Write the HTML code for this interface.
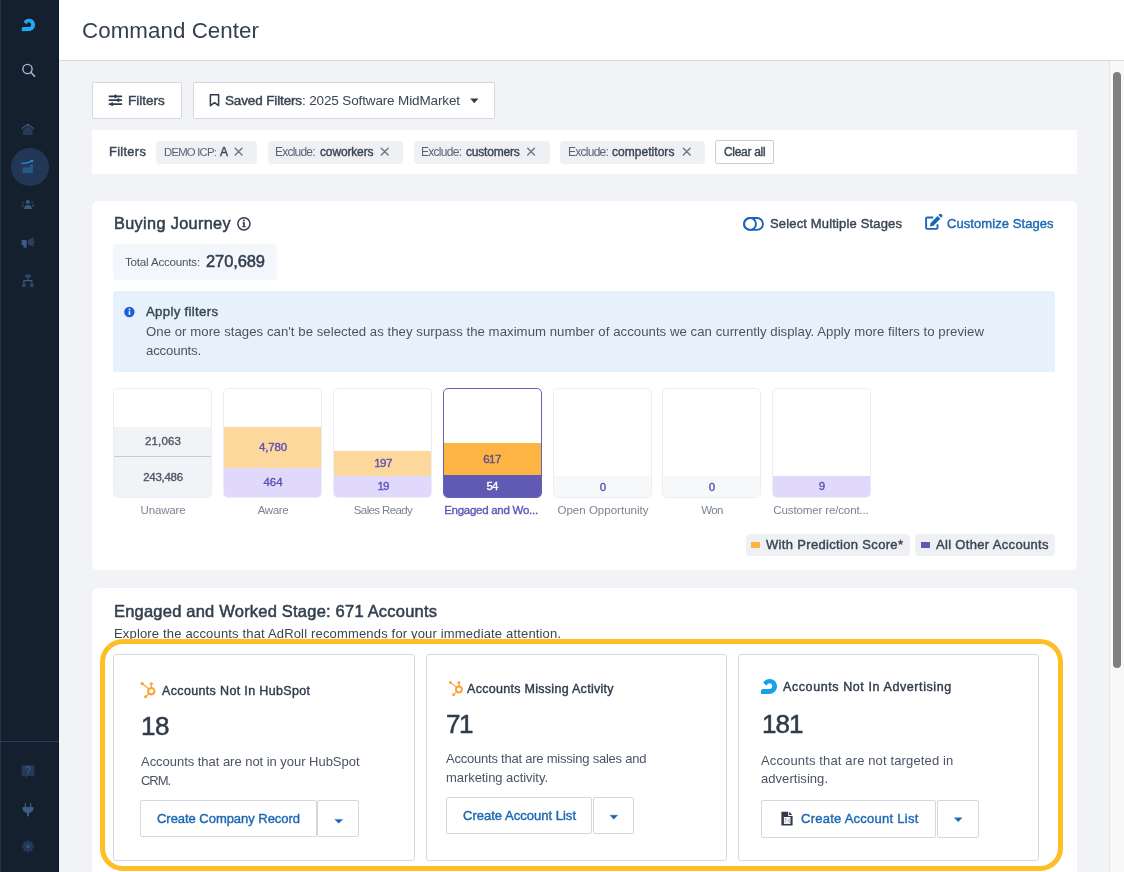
<!DOCTYPE html>
<html><head><meta charset="utf-8">
<style>
*{box-sizing:border-box;margin:0;padding:0}
html,body{width:1124px;height:872px;overflow:hidden;background:#f2f3f7;font-family:"Liberation Sans",sans-serif}
.a{position:absolute}
.tx{position:absolute;white-space:nowrap;line-height:1;will-change:transform}
.tx b{font-weight:400;-webkit-text-stroke:0.45px currentColor;color:#3a4454}
#side{left:0;top:0;width:59px;height:872px;background:#15202f;border-left:1px solid #2a3443;border-right:1px solid #0e1723}
#hdr{left:59px;top:0;width:1065px;height:61px;background:#fff;border-bottom:1px solid #d6d8de}
#track{left:1109px;top:61px;width:15px;height:811px;background:#f8f8f8;border-left:1px solid #e6e6e6}
#thumb{left:1113px;top:72px;width:8px;height:596px;background:#7f7f7f;border-radius:4px}
.btn{background:#fff;border:1px solid #d5d8de;border-radius:2px}
.card{background:#fff;border-radius:6px}
.chip{background:#eef0f4;border-radius:4px}
.stage{border:1px solid #eceef3;border-radius:5px;overflow:hidden;background:#fff}
.stage .f{position:absolute;left:0;width:100%}
.ic{position:absolute;overflow:visible}
</style></head><body>
<!-- sidebar -->
<div id="side" class="a"></div>
<svg class="ic" style="left:0;top:0" width="59" height="872" viewBox="0 0 59 872">
  <!-- logo -->
  <path transform="translate(21.8 18.7) scale(0.83)" d="M0 15 L0 12 C0 10.8 1 10 2.2 10 L8.6 10 C10.1 10 11.3 8.7 11.3 7.2 C11.3 5.6 10 4.3 8.5 4.3 C7.2 4.3 6.2 5.2 5.5 6.8 L2.1 3.6 C3.6 1.3 6 0 8.8 0 C12.8 0 16 3.2 16 7.3 C16 11.6 12.6 14.9 8.6 14.9 Z" fill="#1ea9f2"/>
  <!-- search -->
  <circle cx="27.5" cy="69" r="4.6" fill="none" stroke="#a6b9d3" stroke-width="1.4"/>
  <path d="M30.8 72.3 L34.6 76.2" stroke="#a6b9d3" stroke-width="1.6" stroke-linecap="round"/>
  <!-- home -->
  <path d="M22.1 128.6 L27.7 124.3 L33.7 128.6" fill="none" stroke="#3a5478" stroke-width="1.2" stroke-linecap="round" stroke-linejoin="round"/>
  <path d="M23.1 129.4 L27.9 126.3 L32.7 129.4 L32.7 134.9 L23.1 134.9 Z" fill="#263a55"/>
  <!-- active -->
  <circle cx="30" cy="167" r="19" fill="#223756"/>
  <path d="M22.6 173 V167 L24.4 167.9 L25.8 166.7 L27.6 167.7 L29.7 167.3 L30 164.6 L32.9 164.6 V173 Z" fill="#255b8c"/>
  <path d="M22 163.4 C25.4 163.4 28.4 163 31 161.4" fill="none" stroke="#2e8ad8" stroke-width="1.4" stroke-linecap="round"/>
  <path d="M30.2 160 L33.8 159.8 L32.2 162.6 Z" fill="#2e8ad8"/>
  <!-- people -->
  <circle cx="27.8" cy="202" r="2.1" fill="#3c5a80"/>
  <path d="M24.1 208.9 C24.1 206.4 25.4 205 27.9 205 C30.5 205 31.9 206.4 31.9 208.9 Z" fill="#3c5a80"/>
  <circle cx="23.3" cy="202.4" r="1.1" fill="#2a3f5c"/><ellipse cx="22.6" cy="205.8" rx="1.3" ry="1.2" fill="#2a3f5c"/>
  <circle cx="32.3" cy="202.4" r="1.1" fill="#2a3f5c"/><ellipse cx="33" cy="205.8" rx="1.3" ry="1.2" fill="#2a3f5c"/>
  <!-- megaphone -->
  <path d="M21.6 240 H26.8 V245.2 H26.4 V247.8 H23.6 V245.2 H21.6 Z" fill="#3d5a80" rx="1"/>
  <path d="M28 240 L33.6 237.2 L33.6 246.8 L28 244.6 Z" fill="#2a405c"/>
  <rect x="33.8" y="241" width="0.9" height="2.2" fill="#2a405c"/>
  <!-- org -->
  <rect x="25" y="274.4" width="5.8" height="3.2" rx="0.8" fill="#2f4566"/>
  <path d="M27.9 277.4 V280.6 M23.9 284 V280.6 H31.9 V284" fill="none" stroke="#3d5a80" stroke-width="1.1"/>
  <circle cx="23.9" cy="285.3" r="2" fill="#2f4566"/>
  <circle cx="31.9" cy="285.3" r="2" fill="#2f4566"/>
  <!-- separator -->
  <rect x="0" y="741" width="59" height="1" fill="#26405d"/>
  <!-- help -->
  <path d="M22.4 765.2 L33.6 765.2 Q34.4 765.2 34.4 766 L34.4 775.2 Q34.4 776 33.6 776 L27.8 776 L26.4 777.8 L25.4 776 L22.4 776 Q21.6 776 21.6 775.2 L21.6 766 Q21.6 765.2 22.4 765.2 Z" fill="#243958"/>
  <path d="M25.9 768.6 Q26.1 766.6 28.2 766.6 Q30.3 766.7 30.3 768.5 Q30.3 769.7 29 770.4 Q28.2 770.9 28.2 772" fill="none" stroke="#3d5a80" stroke-width="1.3"/>
  <rect x="27.5" y="773" width="1.4" height="1.4" fill="#3d5a80"/>
  <!-- plug -->
  <path d="M25.4 803.2 V807 M30.6 803.2 V807" stroke="#3d5a80" stroke-width="1.3"/>
  <path d="M22.6 807 H33.4 V808.6 Q33.4 811.6 29 813.2 V816.2 H27 V813.2 Q22.6 811.6 22.6 808.6 Z" fill="#3d5a80"/>
  <!-- gear -->
  <g transform="translate(28 846.4)" fill="#243958">
    <circle r="4.7"/>
    <g><rect x="-1.3" y="-6" width="2.6" height="12" rx=".5"/><rect x="-1.3" y="-6" width="2.6" height="12" rx=".5" transform="rotate(45)"/><rect x="-1.3" y="-6" width="2.6" height="12" rx=".5" transform="rotate(90)"/><rect x="-1.3" y="-6" width="2.6" height="12" rx=".5" transform="rotate(135)"/></g>
    <circle r="1.5" fill="#3d5a80"/>
  </g>
</svg>
<!-- header -->
<div id="hdr" class="a"></div>
<!-- scrollbar -->
<div id="track" class="a"></div>
<div id="thumb" class="a"></div>

<!-- filter buttons -->
<div class="a btn" style="left:92px;top:82px;width:90px;height:37px"></div>
<div class="a btn" style="left:193px;top:82px;width:302px;height:37px"></div>
<svg class="ic" style="left:0;top:0" width="1124" height="872" viewBox="0 0 1124 872">
  <!-- sliders icon -->
  <path d="M109.4 96.3 H121.4 M109.4 100.2 H121.4 M109.4 104.1 H121.4" stroke="#2f3b4c" stroke-width="1.7" stroke-linecap="round"/>
  <rect x="114.4" y="94.4" width="2" height="3.8" rx=".8" fill="#2f3b4c"/>
  <rect x="117.4" y="98.3" width="2" height="3.8" rx=".8" fill="#2f3b4c"/>
  <rect x="111.1" y="102.2" width="2" height="3.8" rx=".8" fill="#2f3b4c"/>
  <!-- bookmark -->
  <path d="M210.4 94.7 H218.6 V105.6 L214.5 102.6 L210.4 105.6 Z" fill="none" stroke="#2f3b4c" stroke-width="1.5" stroke-linejoin="round"/>
  <!-- caret -->
  <path d="M470.6 98.7 L478 98.7 L474.3 102.9 Z" fill="#2f3b4c" stroke="#2f3b4c" stroke-width=".4" stroke-linejoin="round"/>
</svg>

<!-- filter bar -->
<div class="a" style="left:92px;top:130px;width:985px;height:44px;background:#fff"></div>
<div class="a chip" style="left:156px;top:141px;width:101px;height:23px"></div>
<div class="a chip" style="left:268px;top:141px;width:135px;height:23px"></div>
<div class="a chip" style="left:414px;top:141px;width:136px;height:23px"></div>
<div class="a chip" style="left:560px;top:141px;width:145px;height:23px"></div>
<div class="a btn" style="left:715px;top:140px;width:59px;height:24px;border-color:#c9ccd3"></div>
<svg class="ic" style="left:0;top:0" width="1124" height="872" viewBox="0 0 1124 872">
  <g stroke="#6e7888" stroke-width="1.45" stroke-linecap="round">
    <path d="M235.2 148.3 L242 155 M242 148.3 L235.2 155"/>
    <path d="M381.3 148.3 L388.1 155 M388.1 148.3 L381.3 155"/>
    <path d="M527.7 148.3 L534.5 155 M534.5 148.3 L527.7 155"/>
    <path d="M683.3 148.3 L690.1 155 M690.1 148.3 L683.3 155"/>
  </g>
</svg>

<!-- buying journey card -->
<div class="a card" style="left:92px;top:201px;width:985px;height:369px"></div>
<div class="a" style="left:113px;top:244px;width:164px;height:36px;background:#f3f7fc;border-radius:4px"></div>
<div class="a" style="left:113px;top:291px;width:942px;height:81px;background:#e7f1fc;border-radius:2px"></div>
<svg class="ic" style="left:0;top:0" width="1124" height="872" viewBox="0 0 1124 872">
  <!-- info outline -->
  <circle cx="243.9" cy="223.8" r="6.1" fill="none" stroke="#333f4f" stroke-width="1.5"/>
  <rect x="243.1" y="222.6" width="1.7" height="4.4" fill="#333f4f"/>
  <rect x="242.2" y="226.2" width="3.6" height="1.1" fill="#333f4f"/>
  <rect x="242.4" y="222.4" width="2.4" height="1" fill="#333f4f"/>
  <circle cx="243.9" cy="220.4" r="1" fill="#333f4f"/>
  <!-- toggle -->
  <rect x="744.05" y="218" width="18.9" height="11.9" rx="5.95" fill="none" stroke="#1a66b6" stroke-width="1.9"/>
  <circle cx="750" cy="223.95" r="5.95" fill="none" stroke="#1a66b6" stroke-width="1.9"/>
  <!-- edit -->
  <path d="M933.2 217.5 H927.2 Q926.1 217.5 926.1 218.6 V227.8 Q926.1 228.9 927.2 228.9 H936.4 Q937.5 228.9 937.5 227.8 V224.2" fill="none" stroke="#1a66b6" stroke-width="1.9"/>
  <path d="M929.9 226.6 L930.6 223 L937.6 216 L940.4 218.8 L933.4 225.8 Z" fill="#1a66b6"/>
  <path d="M938.5 215.1 L939.6 214 Q940.4 213.3 941.2 214 L942.2 215 Q942.9 215.8 942.2 216.6 L941.1 217.7 Z" fill="#1a66b6"/>
  <!-- info filled -->
  <circle cx="129.4" cy="312" r="5.2" fill="#1e5fd4"/>
  <rect x="128.7" y="311.2" width="1.5" height="3.6" fill="#fff"/>
  <circle cx="129.45" cy="309.4" r=".85" fill="#fff"/>
</svg>

<!-- stages -->
<div class="a stage" style="left:113px;top:388px;width:99px;height:110px;background:#fff">
  <div class="f" style="top:38px;height:72px;background:#f2f3f7"></div>
  <div class="f" style="top:67px;height:1px;background:#c8cbd3"></div>
</div>
<div class="a stage" style="left:223px;top:388px;width:99px;height:110px">
  <div class="f" style="top:38px;height:41px;background:#fdd89c"></div>
  <div class="f" style="top:79px;height:31px;background:#e0d9fb"></div>
</div>
<div class="a stage" style="left:333px;top:388px;width:99px;height:110px">
  <div class="f" style="top:62px;height:25px;background:#fdd89c"></div>
  <div class="f" style="top:87px;height:23px;background:#e0d9fb"></div>
</div>
<div class="a stage" style="left:443px;top:388px;width:99px;height:110px;border-color:#6661ba">
  <div class="f" style="top:54px;height:32px;background:#fdb443"></div>
  <div class="f" style="top:86px;height:24px;background:#5f5bb5"></div>
</div>
<div class="a stage" style="left:553px;top:388px;width:99px;height:110px">
  <div class="f" style="top:87px;height:23px;background:#f7f8fa"></div>
</div>
<div class="a stage" style="left:662px;top:388px;width:99px;height:110px">
  <div class="f" style="top:87px;height:23px;background:#f7f8fa"></div>
</div>
<div class="a stage" style="left:772px;top:388px;width:99px;height:110px">
  <div class="f" style="top:87px;height:23px;background:#e0d9fb"></div>
</div>

<!-- legend -->
<div class="a chip" style="left:746px;top:534px;width:164px;height:22px"></div>
<div class="a chip" style="left:915px;top:534px;width:140px;height:22px"></div>
<div class="a" style="left:751px;top:542px;width:9px;height:6px;background:#fdb443"></div>
<div class="a" style="left:921px;top:542px;width:9px;height:6px;background:#5f5bb5"></div>

<!-- engaged card -->
<div class="a card" style="left:92px;top:588px;width:985px;height:300px"></div>
<div class='tx' id='t0' style='left:81.5px;top:20.00px;font-size:22.3px;font-weight:400;color:#333f4f;letter-spacing:0.078px;'>Command Center</div>
<div class='tx' id='t1' style='left:127.5px;top:94.00px;font-size:13.5px;font-weight:400;-webkit-text-stroke:0.43px #3a4555;color:#3a4555;letter-spacing:-0.008px;'>Filters</div>
<div class='tx' id='t2' style='left:225px;top:94.00px;font-size:13.5px;font-weight:400;color:#3a4555;letter-spacing:-0.138px;'><b>Saved Filters</b>: 2025 Software MidMarket</div>
<div class='tx' id='t3' style='left:108.5px;top:146.00px;font-size:12.8px;font-weight:400;-webkit-text-stroke:0.41px #3a4555;color:#3a4555;letter-spacing:0.326px;'>Filters</div>
<div class='tx' id='t4' style='left:164px;top:147.00px;font-size:11.3px;font-weight:400;color:#5b6474;letter-spacing:-0.763px;'>DEMO ICP:</div>
<div class='tx' id='t5' style='left:220.2px;top:146.00px;font-size:12px;font-weight:400;-webkit-text-stroke:0.38px #3a4454;color:#3a4454;letter-spacing:-1.016px;'>A</div>
<div class='tx' id='t6' style='left:275.4px;top:146.00px;font-size:12px;font-weight:400;color:#5b6474;letter-spacing:-0.776px;'>Exclude:</div>
<div class='tx' id='t7' style='left:319.7px;top:146.00px;font-size:12px;font-weight:400;-webkit-text-stroke:0.38px #3a4454;color:#3a4454;letter-spacing:-0.148px;'>coworkers</div>
<div class='tx' id='t8' style='left:421.3px;top:146.00px;font-size:12px;font-weight:400;color:#5b6474;letter-spacing:-0.719px;'>Exclude:</div>
<div class='tx' id='t9' style='left:465.8px;top:146.00px;font-size:12px;font-weight:400;-webkit-text-stroke:0.38px #3a4454;color:#3a4454;letter-spacing:-0.207px;'>customers</div>
<div class='tx' id='t10' style='left:567.7px;top:146.00px;font-size:12px;font-weight:400;color:#5b6474;letter-spacing:-0.733px;'>Exclude:</div>
<div class='tx' id='t11' style='left:612.3px;top:146.00px;font-size:12px;font-weight:400;-webkit-text-stroke:0.38px #3a4454;color:#3a4454;letter-spacing:0.037px;'>competitors</div>
<div class='tx' id='t12' style='left:723.8px;top:146.00px;font-size:12px;font-weight:400;-webkit-text-stroke:0.38px #3a4454;color:#3a4454;letter-spacing:-0.302px;'>Clear all</div>
<div class='tx' id='t13' style='left:114.3px;top:215.00px;font-size:16.3px;font-weight:400;-webkit-text-stroke:0.52px #333f4f;color:#333f4f;letter-spacing:0.336px;'>Buying Journey</div>
<div class='tx' id='t14' style='left:124.5px;top:256.00px;font-size:11.6px;font-weight:400;color:#4a5466;letter-spacing:-0.199px;'>Total Accounts:</div>
<div class='tx' id='t15' style='left:206.3px;top:253.00px;font-size:16.5px;font-weight:400;-webkit-text-stroke:0.53px #333f4f;color:#333f4f;letter-spacing:-0.109px;'>270,689</div>
<div class='tx' id='t16' style='left:770px;top:217.00px;font-size:13px;font-weight:400;-webkit-text-stroke:0.42px #3a4555;color:#3a4555;letter-spacing:0.161px;'>Select Multiple Stages</div>
<div class='tx' id='t17' style='left:947.4px;top:217.00px;font-size:13px;font-weight:400;-webkit-text-stroke:0.42px #1d69b4;color:#1d69b4;letter-spacing:0.073px;'>Customize Stages</div>
<div class='tx' id='t18' style='left:146px;top:305.00px;font-size:13.2px;font-weight:400;-webkit-text-stroke:0.42px #3a4555;color:#3a4555;letter-spacing:0.319px;'>Apply filters</div>
<div class='tx' id='t19' style='left:146px;top:325.00px;font-size:13.2px;font-weight:400;color:#4a5466;letter-spacing:0.038px;'>One or more stages can't be selected as they surpass the maximum number of accounts we can currently display. Apply more filters to preview</div>
<div class='tx' id='t20' style='left:146px;top:344.00px;font-size:13.2px;font-weight:400;color:#4a5466;letter-spacing:-0.157px;'>accounts.</div>
<div class='tx' id='t21' style='left:114px;top:603.00px;font-size:16.5px;font-weight:400;-webkit-text-stroke:0.53px #333f4f;color:#333f4f;letter-spacing:0.209px;'>Engaged and Worked Stage: 671 Accounts</div>
<div class='tx' id='t22' style='left:114px;top:627.00px;font-size:13px;font-weight:400;color:#3a4555;letter-spacing:0.167px;'>Explore the accounts that AdRoll recommends for your immediate attention.</div>
<div class='tx' id='t23' style='left:62.80000000000001px;top:436.00px;font-size:11.5px;font-weight:400;-webkit-text-stroke:0.37px #4f5666;color:#4f5666;letter-spacing:0.163px;width:200px;text-align:center;'>21,063</div>
<div class='tx' id='t24' style='left:62.80000000000001px;top:472.00px;font-size:11.5px;font-weight:400;-webkit-text-stroke:0.37px #4f5666;color:#4f5666;letter-spacing:-0.263px;width:200px;text-align:center;'>243,486</div>
<div class='tx' id='t25' style='left:172.5px;top:442.00px;font-size:11.5px;font-weight:400;-webkit-text-stroke:0.37px #5a52b0;color:#5a52b0;letter-spacing:-0.195px;width:200px;text-align:center;'>4,780</div>
<div class='tx' id='t26' style='left:172.5px;top:477.00px;font-size:11.5px;font-weight:400;-webkit-text-stroke:0.37px #5a52b0;color:#5a52b0;letter-spacing:-0.094px;width:200px;text-align:center;'>464</div>
<div class='tx' id='t27' style='left:282.5px;top:458.00px;font-size:11.5px;font-weight:400;-webkit-text-stroke:0.37px #5a52b0;color:#5a52b0;letter-spacing:-0.594px;width:200px;text-align:center;'>197</div>
<div class='tx' id='t28' style='left:282.5px;top:481.00px;font-size:11.5px;font-weight:400;-webkit-text-stroke:0.37px #5a52b0;color:#5a52b0;letter-spacing:-0.797px;width:200px;text-align:center;'>19</div>
<div class='tx' id='t29' style='left:392.2px;top:454.00px;font-size:11.5px;font-weight:400;-webkit-text-stroke:0.37px #5b4f8e;color:#5b4f8e;letter-spacing:-0.594px;width:200px;text-align:center;'>617</div>
<div class='tx' id='t30' style='left:392.2px;top:481.00px;font-size:11.5px;font-weight:400;-webkit-text-stroke:0.37px #ffffff;color:#ffffff;letter-spacing:-0.797px;width:200px;text-align:center;'>54</div>
<div class='tx' id='t31' style='left:502.5px;top:482.00px;font-size:11.5px;font-weight:400;-webkit-text-stroke:0.37px #5a52b0;color:#5a52b0;letter-spacing:0.000px;width:200px;text-align:center;'>0</div>
<div class='tx' id='t32' style='left:611.5px;top:482.00px;font-size:11.5px;font-weight:400;-webkit-text-stroke:0.37px #5a52b0;color:#5a52b0;letter-spacing:0.000px;width:200px;text-align:center;'>0</div>
<div class='tx' id='t33' style='left:721.5px;top:481.00px;font-size:11.5px;font-weight:400;-webkit-text-stroke:0.37px #5a52b0;color:#5a52b0;letter-spacing:0.000px;width:200px;text-align:center;'>9</div>
<div class='tx' id='t34' style='left:62.80000000000001px;top:505.00px;font-size:11.5px;font-weight:400;color:#7a8494;letter-spacing:-0.172px;width:200px;text-align:center;'>Unaware</div>
<div class='tx' id='t35' style='left:172.5px;top:505.00px;font-size:11.5px;font-weight:400;color:#7a8494;letter-spacing:-0.348px;width:200px;text-align:center;'>Aware</div>
<div class='tx' id='t36' style='left:282.5px;top:505.00px;font-size:11.5px;font-weight:400;color:#7a8494;letter-spacing:-0.622px;width:200px;text-align:center;'>Sales Ready</div>
<div class='tx' id='t37' style='left:390.5px;top:505.00px;font-size:11.5px;font-weight:400;-webkit-text-stroke:0.37px #5d58b5;color:#5d58b5;letter-spacing:-0.266px;width:200px;text-align:center;'>Engaged and Wo...</div>
<div class='tx' id='t38' style='left:502.5px;top:505.00px;font-size:11.5px;font-weight:400;color:#7a8494;letter-spacing:0.015px;width:200px;text-align:center;'>Open Opportunity</div>
<div class='tx' id='t39' style='left:611.5px;top:505.00px;font-size:11.5px;font-weight:400;color:#7a8494;letter-spacing:-0.727px;width:200px;text-align:center;'>Won</div>
<div class='tx' id='t40' style='left:720.8px;top:505.00px;font-size:11.5px;font-weight:400;color:#7a8494;letter-spacing:-0.128px;width:200px;text-align:center;'>Customer re/cont...</div>
<div class='tx' id='t41' style='left:766.3px;top:538.00px;font-size:13px;font-weight:400;-webkit-text-stroke:0.42px #3a4555;color:#3a4555;letter-spacing:0.330px;'>With Prediction Score*</div>
<div class='tx' id='t42' style='left:936px;top:538.00px;font-size:13px;font-weight:400;-webkit-text-stroke:0.42px #3a4555;color:#3a4555;letter-spacing:0.326px;'>All Other Accounts</div>
<div class="a" style="left:99.5px;top:638.6px;width:963px;height:232.2px;border:5.5px solid #fdbe26;border-radius:23px"></div>
<div class="a" style="left:113px;top:654px;width:302px;height:207px;background:#fff;border:1px solid #d6d9df;border-radius:3px"></div>
<div class="a" style="left:426px;top:654px;width:301px;height:207px;background:#fff;border:1px solid #d6d9df;border-radius:3px"></div>
<div class="a" style="left:738px;top:654px;width:301px;height:207px;background:#fff;border:1px solid #d6d9df;border-radius:3px"></div>
<div class="a btn" style="left:140px;top:800px;width:177px;height:37px"></div>
<div class="a btn" style="left:317px;top:800px;width:42px;height:37px"></div>
<div class="a btn" style="left:446px;top:797px;width:146px;height:37px"></div>
<div class="a btn" style="left:593px;top:797px;width:41px;height:37px"></div>
<div class="a btn" style="left:761px;top:800px;width:175px;height:38px"></div>
<div class="a btn" style="left:937px;top:800px;width:42px;height:38px"></div>
<svg class="ic" style="left:0;top:0" width="1124" height="872" viewBox="0 0 1124 872">
  <!-- carets -->
  <path d="M334.9 819.4 L342.6 819.4 L338.75 823.3 Z" fill="#1a66b6" stroke="#1a66b6" stroke-width=".4" stroke-linejoin="round"/>
  <path d="M610 815.2 L617.6 815.2 L613.8 819.3 Z" fill="#1a66b6" stroke="#1a66b6" stroke-width=".4" stroke-linejoin="round"/>
  <path d="M954.4 817.8 L962 817.8 L958.2 821.8 Z" fill="#1a66b6" stroke="#1a66b6" stroke-width=".4" stroke-linejoin="round"/>
  <!-- hubspot -->
  <g transform="translate(151.3 691.2) scale(1.08)">
    <circle cx="0" cy="0" r="2.95" fill="none" stroke="#fca231" stroke-width="1.9"/>
    <path d="M0 -3 L0 -6.8 M-2.2 -2.1 L-8.5 -7.1 M-2.1 2.1 L-5.3 5.2" stroke="#fca231" stroke-width="1.1" fill="none"/>
    <circle cx="0" cy="-6.8" r="1.45" fill="#fca231"/>
    <circle cx="-8.5" cy="-7.1" r="1.5" fill="#fca231"/>
    <circle cx="-5.3" cy="5.2" r="1.4" fill="#fca231"/>
  </g>
  <g transform="translate(458.9 689.5)">
    <circle cx="0" cy="0" r="2.95" fill="none" stroke="#fca231" stroke-width="1.9"/>
    <path d="M0 -3 L0 -6.8 M-2.2 -2.1 L-8.5 -7.1 M-2.1 2.1 L-5.3 5.2" stroke="#fca231" stroke-width="1.1" fill="none"/>
    <circle cx="0" cy="-6.8" r="1.45" fill="#fca231"/>
    <circle cx="-8.5" cy="-7.1" r="1.5" fill="#fca231"/>
    <circle cx="-5.3" cy="5.2" r="1.4" fill="#fca231"/>
  </g>
  <!-- adroll -->
  <path transform="translate(761 679)" d="M0 15 L0 12 C0 10.8 1 10 2.2 10 L8.6 10 C10.1 10 11.3 8.7 11.3 7.2 C11.3 5.6 10 4.3 8.5 4.3 C7.2 4.3 6.2 5.2 5.5 6.8 L2.1 3.6 C3.6 1.3 6 0 8.8 0 C12.8 0 16 3.2 16 7.3 C16 11.6 12.6 14.9 8.6 14.9 Z" fill="#16a0ea"/>
  <!-- file icon -->
  <path d="M781.4 811.7 H788.2 V816 H792.6 V825.4 H781.4 Z" fill="#2f3b4c"/>
  <path d="M789.1 811.8 L792.5 815.1 H789.1 Z" fill="#2f3b4c"/>
  <rect x="783.9" y="817" width="6.6" height="6.9" fill="#fff"/>
  <path d="M785.3 822.9 V818.2 L789.2 822.6 V818" fill="none" stroke="#9aa2ad" stroke-width="0.8"/>
</svg>
<div class='tx' id='t43' style='left:162px;top:685.00px;font-size:12.5px;font-weight:400;-webkit-text-stroke:0.40px #2f3b4c;color:#2f3b4c;letter-spacing:0.347px;'>Accounts Not In HubSpot</div>
<div class='tx' id='t44' style='left:140.7px;top:713.00px;font-size:26px;font-weight:400;-webkit-text-stroke:0.55px #2f3b4c;color:#2f3b4c;letter-spacing:-0.422px;'>18</div>
<div class='tx' id='t45' style='left:140.5px;top:755.00px;font-size:13px;font-weight:400;color:#4a5466;letter-spacing:-0.033px;'>Accounts that are not in your HubSpot</div>
<div class='tx' id='t46' style='left:140.8px;top:774.00px;font-size:13px;font-weight:400;color:#4a5466;letter-spacing:-1.073px;'>CRM.</div>
<div class='tx' id='t47' style='left:157px;top:812.00px;font-size:13px;font-weight:400;-webkit-text-stroke:0.42px #1d69b4;color:#1d69b4;letter-spacing:-0.040px;'>Create Company Record</div>
<div class='tx' id='t48' style='left:466.8px;top:683.00px;font-size:12.5px;font-weight:400;-webkit-text-stroke:0.40px #2f3b4c;color:#2f3b4c;letter-spacing:0.290px;'>Accounts Missing Activity</div>
<div class='tx' id='t49' style='left:446.2px;top:711.00px;font-size:26px;font-weight:400;-webkit-text-stroke:0.55px #2f3b4c;color:#2f3b4c;letter-spacing:-1.422px;'>71</div>
<div class='tx' id='t50' style='left:446.2px;top:752.00px;font-size:13px;font-weight:400;color:#4a5466;letter-spacing:-0.224px;'>Accounts that are missing sales and</div>
<div class='tx' id='t51' style='left:446.2px;top:771.00px;font-size:13px;font-weight:400;color:#4a5466;letter-spacing:-0.060px;'>marketing activity.</div>
<div class='tx' id='t52' style='left:462.7px;top:809.00px;font-size:13px;font-weight:400;-webkit-text-stroke:0.42px #1d69b4;color:#1d69b4;letter-spacing:0.015px;'>Create Account List</div>
<div class='tx' id='t53' style='left:782.5px;top:681.00px;font-size:12.5px;font-weight:400;-webkit-text-stroke:0.40px #2f3b4c;color:#2f3b4c;letter-spacing:0.590px;'>Accounts Not In Advertising</div>
<div class='tx' id='t54' style='left:761.5px;top:711.00px;font-size:26px;font-weight:400;-webkit-text-stroke:0.55px #2f3b4c;color:#2f3b4c;letter-spacing:-0.945px;'>181</div>
<div class='tx' id='t55' style='left:761px;top:754.00px;font-size:13px;font-weight:400;color:#4a5466;letter-spacing:0.137px;'>Accounts that are not targeted in</div>
<div class='tx' id='t56' style='left:760.9px;top:772.00px;font-size:13px;font-weight:400;color:#4a5466;letter-spacing:0.047px;'>advertising.</div>
<div class='tx' id='t57' style='left:801.2px;top:812.00px;font-size:13px;font-weight:400;-webkit-text-stroke:0.42px #1d69b4;color:#1d69b4;letter-spacing:0.254px;'>Create Account List</div>
</body></html>
